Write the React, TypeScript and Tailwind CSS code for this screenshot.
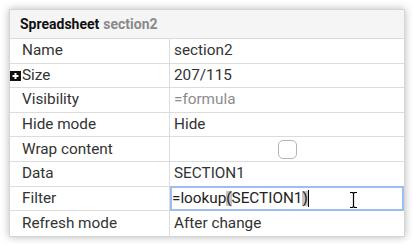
import React from 'react';

const rows: { label: string; value: string; kind?: 'muted' | 'check' | 'edit'; plus?: boolean }[] = [
  { label: 'Name', value: 'section2' },
  { label: 'Size', value: '207/115', plus: true },
  { label: 'Visibility', value: '=formula', kind: 'muted' },
  { label: 'Hide mode', value: 'Hide' },
  { label: 'Wrap content', value: '', kind: 'check' },
  { label: 'Data', value: 'SECTION1' },
  { label: 'Filter', value: '', kind: 'edit' },
  { label: 'Refresh mode', value: 'After change' },
];

function PlusBox() {
  return (
    <svg width="11" height="10" viewBox="0 0 11 10" className="absolute left-0 top-[7px]">
      <rect x="0" y="0" width="11" height="10" fill="#111" />
      <path d="M5.5 2v6M2.5 5h6" stroke="#fff" strokeWidth="2" />
    </svg>
  );
}

function IBeam() {
  return (
    <svg width="9" height="18" viewBox="0 0 9 18" className="absolute left-[177px] top-[3px]">
      <path d="M1 1.5h2.5l1 1 1-1H8M4.5 2.5v13M1 16.5h2.5l1-1 1 1H8" stroke="#000" strokeWidth="1.2" fill="none" />
    </svg>
  );
}

export default function App() {
  return (
    <div className="w-[413px] h-[244px] bg-white p-[9px] pr-[8px] font-['Roboto',sans-serif]">
      <div className="w-[396px] bg-white border border-[#d6d6d6] shadow-[0_0_8px_rgba(0,0,0,0.28)]">
        <div className="h-[29px] bg-[#f5f5f5] border-b border-[#dcdcdc] flex items-center pl-[10px] text-[14px] font-bold">
          <span className="text-[#111]">Spreadsheet</span>
          <span className="text-[#8a8a8a] ml-[4px]">section2</span>
        </div>
        {rows.map((r) => (
          <div key={r.label} className="flex h-[24.6px] border-b border-[#dcdcdc] last:border-b-0 text-[15.3px] leading-none">
            <div className="relative w-[160px] border-r border-[#dcdcdc] pl-[12px] flex items-center text-[#333]">
              {r.plus && <PlusBox />}
              {r.label}
            </div>
            {r.kind === 'edit' ? (
              <div className="relative flex-1 -my-px border-2 border-[#9dbdf2] flex items-center text-[#222]">
                <span>=lookup</span>
                <span className="bg-[#c4c4c4]">(</span>
                <span>SECTION1</span>
                <span className="bg-[#c4c4c4]">)</span>
                <span className="w-px h-[17px] bg-black" />
                <IBeam />
              </div>
            ) : r.kind === 'check' ? (
              <div className="flex-1 flex items-center justify-center">
                <div className="w-[19px] h-[19px] rounded-[5px] border border-[#b5b5b5]" />
              </div>
            ) : (
              <div className={`flex-1 flex items-center pl-[4px] ${r.kind === 'muted' ? 'text-[#8c8c8c]' : 'text-[#333]'}`}>
                {r.value}
              </div>
            )}
          </div>
        ))}
      </div>
    </div>
  );
}
